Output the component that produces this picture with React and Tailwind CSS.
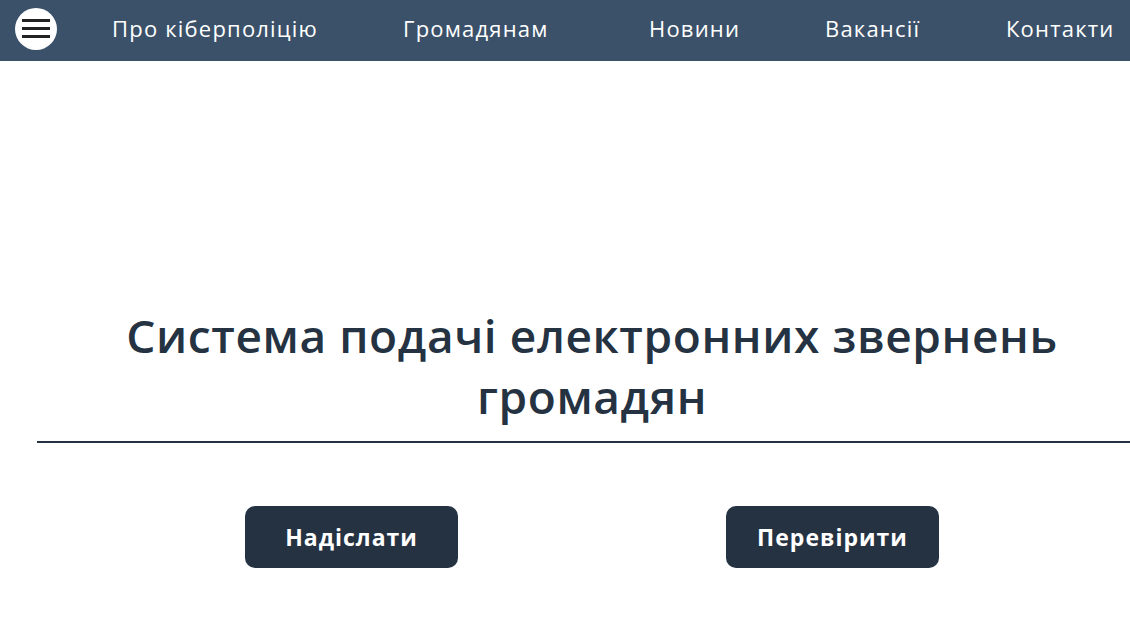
import React from "react";

const links = ["Про кіберполіцію", "Громадянам", "Новини", "Вакансії", "Контакти"];

export default function App() {
  return (
    <div
      className="min-h-screen w-[1130px] overflow-hidden bg-white"
      style={{ fontFamily: '"Open Sans", "Noto Sans", sans-serif' }}
    >
      {/* top bar */}
      <nav className="h-[61px] bg-[#3b5169] flex items-center pl-[15px]">
        <button className="size-[42px] shrink-0 rounded-full bg-white flex flex-col items-center justify-center gap-[5px] -mt-[4px]">
          <span className="block w-[28px] h-[3px] bg-[#222]" />
          <span className="block w-[28px] h-[3px] bg-[#222]" />
          <span className="block w-[28px] h-[3px] bg-[#222]" />
        </button>
        <ul className="flex items-center text-white text-[22px] tracking-[1.2px] whitespace-nowrap -mt-[5px]">
          <li className="ml-[55px] w-[291px]">{links[0]}</li>
          <li className="w-[246px]">{links[1]}</li>
          <li className="w-[176px]">{links[2]}</li>
          <li className="w-[181px]">{links[3]}</li>
          <li>{links[4]}</li>
        </ul>
      </nav>

      {/* main */}
      <main className="ml-[37px] w-[1110px] pt-[244px]">
        <h1 className="text-center text-[46px] leading-[61px] font-semibold text-[#243242] tracking-[0.6px] px-[40px]">
          Система подачі електронних звернень громадян
        </h1>
        <div className="mt-[14px] h-[2px] bg-[#243242]" />
        <div className="flex justify-center gap-[268px] mt-[63px]">
          <button className="w-[213px] h-[62px] rounded-[10px] bg-[#243242] text-white text-[23px] font-bold tracking-[1px]">
            Надіслати
          </button>
          <button className="w-[213px] h-[62px] rounded-[10px] bg-[#243242] text-white text-[23px] font-bold tracking-[1px]">
            Перевірити
          </button>
        </div>
      </main>
    </div>
  );
}
